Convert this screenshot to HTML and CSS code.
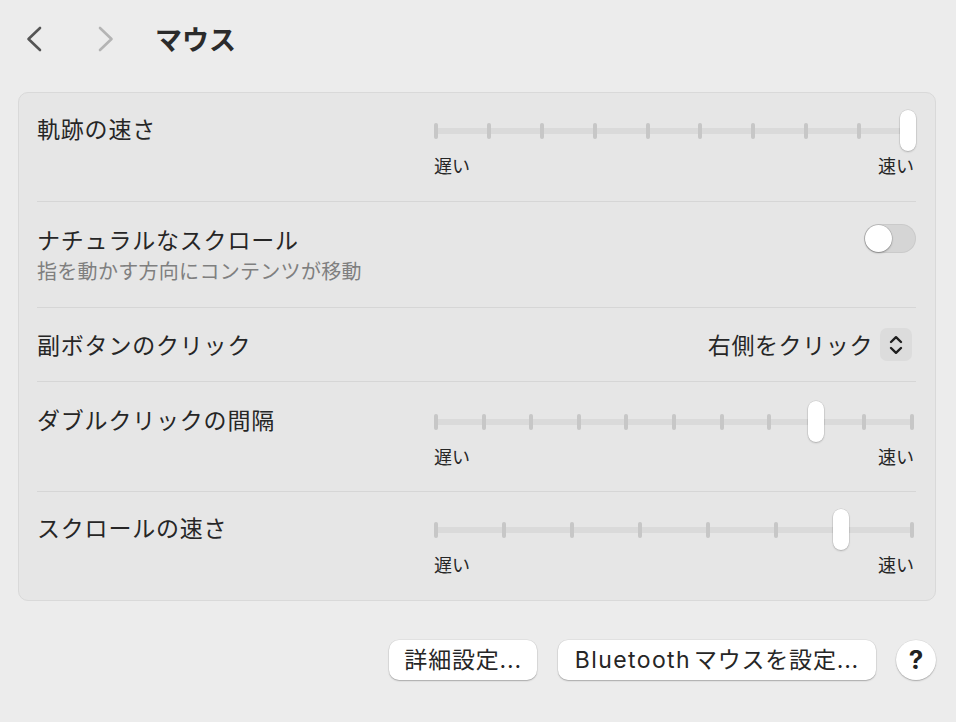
FILE: index.html
```html
<!DOCTYPE html>
<html lang="ja">
<head>
<meta charset="utf-8">
<title>マウス</title>
<link rel="stylesheet" href="styles.css">
</head>
<body>
<div class="window">
  <header class="toolbar">
    <svg class="nav nav-back" width="18" height="26" viewBox="0 0 18 26"><path d="M15 2 L3.5 13 L15 24" fill="none" stroke="#555555" stroke-width="2.6" stroke-linecap="round" stroke-linejoin="round"/></svg>
    <svg class="nav nav-fwd" width="18" height="26" viewBox="0 0 18 26"><path d="M3 2 L14.5 13 L3 24" fill="none" stroke="#b4b4b4" stroke-width="2.6" stroke-linecap="round" stroke-linejoin="round"/></svg>
    <h1 class="title">マウス</h1>
  </header>

  <section class="card">
    <div class="row row-slider first">
      <div class="label">軌跡の速さ</div>
      <div class="slider">
        <div class="track-area">
          <div class="track"></div>
          <div class="ticks">
            <span class="tick"></span><span class="tick"></span><span class="tick"></span><span class="tick"></span><span class="tick"></span><span class="tick"></span><span class="tick"></span><span class="tick"></span><span class="tick"></span><span class="tick"></span>
          </div>
          <div class="thumb" style="left: 466px"></div>
        </div>
        <div class="scale"><span>遅い</span><span>速い</span></div>
      </div>
    </div>

    <div class="row row-toggle">
      <div class="text-col">
        <div class="label">ナチュラルなスクロール</div>
        <div class="sub">指を動かす方向にコンテンツが移動</div>
      </div>
      <div class="toggle"><span class="knob"></span></div>
    </div>

    <div class="row row-popup">
      <div class="label">副ボタンのクリック</div>
      <div class="popup">
        <span class="popup-value">右側をクリック</span>
        <span class="popup-btn">
          <svg width="16" height="22" viewBox="0 0 16 22"><path d="M3 8 L8 3.2 L13 8" fill="none" stroke="#1f1f1f" stroke-width="2.4" stroke-linecap="round" stroke-linejoin="round"/><path d="M3 14 L8 18.8 L13 14" fill="none" stroke="#1f1f1f" stroke-width="2.4" stroke-linecap="round" stroke-linejoin="round"/></svg>
        </span>
      </div>
    </div>

    <div class="row row-slider tall">
      <div class="label">ダブルクリックの間隔</div>
      <div class="slider">
        <div class="track-area">
          <div class="track"></div>
          <div class="ticks">
            <span class="tick"></span><span class="tick"></span><span class="tick"></span><span class="tick"></span><span class="tick"></span><span class="tick"></span><span class="tick"></span><span class="tick"></span><span class="tick"></span><span class="tick"></span><span class="tick"></span>
          </div>
          <div class="thumb" style="left: 374px"></div>
        </div>
        <div class="scale"><span>遅い</span><span>速い</span></div>
      </div>
    </div>

    <div class="row row-slider last">
      <div class="label">スクロールの速さ</div>
      <div class="slider">
        <div class="track-area">
          <div class="track"></div>
          <div class="ticks">
            <span class="tick"></span><span class="tick"></span><span class="tick"></span><span class="tick"></span><span class="tick"></span><span class="tick"></span><span class="tick"></span><span class="tick"></span>
          </div>
          <div class="thumb" style="left: 399px"></div>
        </div>
        <div class="scale"><span>遅い</span><span>速い</span></div>
      </div>
    </div>
  </section>

  <footer class="actions">
    <button class="btn btn-adv">詳細設定...</button>
    <button class="btn btn-bt"><span class="latin">Bluetooth </span>マウスを設定...</button>
    <button class="btn help">?</button>
  </footer>
</div>
</body>
</html>
```

FILE: styles.css
```css
* { box-sizing: border-box; }

html, body {
  margin: 0;
  padding: 0;
  background: #ececec;
}

body {
  width: 956px;
  height: 722px;
  overflow: hidden;
  font-family: "Inter", "Noto Sans CJK JP", sans-serif;
  color: #262626;
}

.window {
  display: flex;
  flex-direction: column;
}

.toolbar {
  height: 78px;
  display: flex;
  align-items: center;
  padding-left: 25px;
}

.nav { display: block; flex: none; }
.nav-fwd { margin-left: 54px; }

.title {
  margin: 0 0 0 40px;
  font-family: "Noto Sans CJK JP", sans-serif;
  font-size: 27px;
  font-weight: 700;
  line-height: 34px;
  color: #2b2b2b;
}

.card {
  margin: 14px 20px 0 18px;
  background: #e6e6e6;
  border: 1px solid #d9d9d9;
  border-radius: 10px;
}

.row {
  margin: 0 19px 0 18px;
  border-bottom: 1px solid #d6d6d6;
  display: flex;
  justify-content: space-between;
}

.row.last { border-bottom: none; }

.label {
  font-family: "Noto Sans CJK JP", sans-serif;
  font-size: 23px;
  line-height: 30px;
  color: #262626;
  letter-spacing: 0.8px;
}

.row-slider {
  align-items: flex-start;
  padding: 17px 0 25px;
}

.row-slider.first { padding-bottom: 26px; }
.row-slider.tall { padding-top: 19px; }
.row-slider.last { padding-bottom: 26px; }

.row-slider .label { margin-top: 3px; }

.slider {
  width: 480px;
  margin-right: 2px;
}

.track-area {
  position: relative;
  height: 41px;
}

.track {
  position: absolute;
  left: 0;
  right: 0;
  top: 18px;
  height: 6px;
  background: #dadada;
  border-radius: 3px;
}

.ticks {
  position: absolute;
  left: 0;
  right: 0;
  top: 13px;
  display: flex;
  justify-content: space-between;
}

.tick {
  width: 4px;
  height: 16px;
  background: #c7c7c7;
  border-radius: 2px;
}

.thumb {
  position: absolute;
  top: 0;
  width: 16px;
  height: 41px;
  background: #ffffff;
  border-radius: 8px;
  box-shadow: 0 0 0 0.5px rgba(0, 0, 0, 0.12), 0 1px 2px rgba(0, 0, 0, 0.2);
}

.scale {
  margin-top: 4px;
  display: flex;
  justify-content: space-between;
  font-family: "Noto Sans CJK JP", sans-serif;
  font-size: 18px;
  line-height: 20px;
  color: #262626;
}

.row-toggle {
  align-items: flex-start;
  padding: 22px 0 23px;
}

.sub {
  margin-top: 4px;
  font-family: "Noto Sans CJK JP", sans-serif;
  font-size: 20px;
  line-height: 26px;
  color: #7f7f7f;
  letter-spacing: 0.3px;
}

.toggle {
  position: relative;
  width: 52px;
  height: 29px;
  background: #d5d5d5;
  border-radius: 15px;
  box-shadow: inset 0 0 0 1px rgba(0, 0, 0, 0.05);
}

.knob {
  position: absolute;
  left: 1px;
  top: 1px;
  width: 27px;
  height: 27px;
  background: #ffffff;
  border-radius: 50%;
  box-shadow: 0 0 0 0.5px rgba(0, 0, 0, 0.15), 0 1px 2px rgba(0, 0, 0, 0.3);
}

.row-popup {
  height: 74px;
  align-items: center;
}

.row-popup .label { margin-top: -2px; }

.popup {
  display: flex;
  align-items: center;
  gap: 7px;
  margin-right: 4px;
}

.popup-value {
  font-family: "Noto Sans CJK JP", sans-serif;
  font-size: 23px;
  line-height: 30px;
  color: #262626;
  letter-spacing: 0.6px;
  margin-top: -2px;
}

.popup-btn {
  width: 32px;
  height: 33px;
  border-radius: 7px;
  background: #dcdcdc;
  display: flex;
  align-items: center;
  justify-content: center;
}

.popup-btn svg { display: block; }

.actions {
  margin-top: 39px;
  padding-right: 20px;
  display: flex;
  justify-content: flex-end;
  gap: 21px;
}

.btn {
  height: 40px;
  padding: 0 17px;
  border: none;
  border-radius: 10px;
  background: #ffffff;
  box-shadow: 0 0 0 0.5px rgba(0, 0, 0, 0.08), 0 1px 1.5px rgba(0, 0, 0, 0.25);
  font-family: "Inter", "Noto Sans CJK JP", sans-serif;
  font-size: 23px;
  line-height: 28px;
  color: #262626;
  letter-spacing: 0.8px;
}

.btn-adv { padding: 0 15px; }

.btn-bt .latin {
  letter-spacing: 1.4px;
  word-spacing: -5px;
}

.btn.help {
  width: 40px;
  padding: 0;
  border-radius: 50%;
  font-size: 26px;
  font-weight: 700;
  color: #222222;
  margin-left: -1px;
  letter-spacing: 0;
}
```
